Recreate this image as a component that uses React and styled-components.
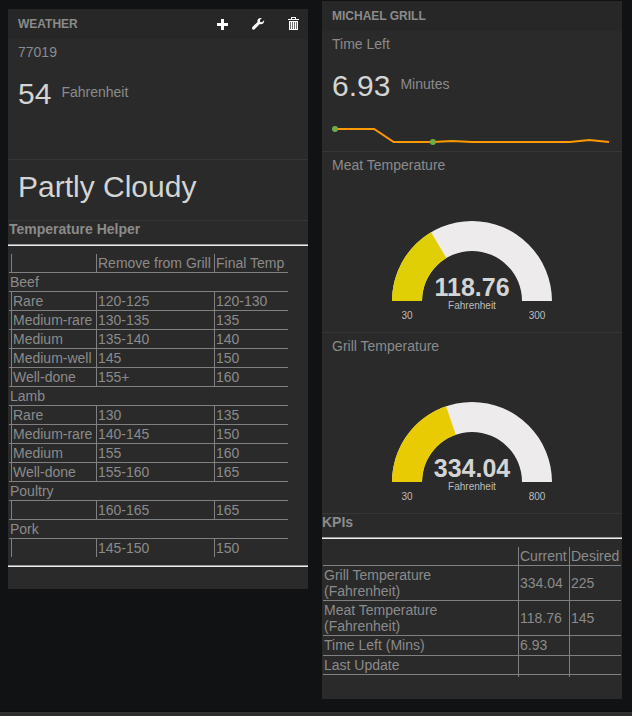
import React from "react";
import styled, { createGlobalStyle } from "styled-components";

const GlobalStyle = createGlobalStyle`
  *, *::before, *::after { box-sizing: border-box; }
  body {
    margin: 0;
    background: #101214;
    color: #8b8b8b;
    font: 14px/16px "Liberation Sans", Arial, sans-serif;
  }
`;

const Page = styled.div`
  min-height: 100vh;
  display: flex;
  flex-direction: column;
`;

const Board = styled.main`
  flex: 1;
  display: grid;
  grid-template-columns: 1fr 1fr;
  align-items: start;
  gap: 14px;
  padding: 1px 10px 12px 8px;
`;

const Pane = styled.section`
  margin-top: ${(p) => (p.$lowered ? "8px" : "0")};
  padding-bottom: 22px;
  background: #2a2a2a;
`;

const PaneHeader = styled.header`
  display: flex;
  align-items: center;
  justify-content: space-between;
  height: 30px;
  padding: 0 8px 0 10px;
  background: #272727;
`;

const PaneTitle = styled.h1`
  margin: 0;
  font-size: 12px;
  font-weight: bold;
  text-transform: uppercase;
`;

const Toolbar = styled.div`
  display: flex;
  gap: 21px;
`;

const IconButton = styled.button`
  display: flex;
  padding: 0;
  border: 0;
  background: none;
  color: #fff;
  cursor: pointer;
`;

const Widget = styled.div`
  display: flex;
  flex-direction: column;
  height: ${(p) => p.$height};
  padding: 4px 10px 0;
  border-bottom: 1px solid #363636;
`;

const WidgetTitle = styled.h2`
  margin: 0;
  font-size: 14px;
  font-weight: normal;
  line-height: 18px;
`;

const Reading = styled.div`
  display: flex;
  align-items: center;
  gap: 10px;
  margin-top: ${(p) => (p.$titled ? "14px" : "4px")};
`;

const Value = styled.span`
  color: #d3d4d4;
  font-size: 30px;
  line-height: 38px;
`;

const Unit = styled.span`
  padding-bottom: 4px;
`;

const Spark = styled.svg`
  display: block;
  width: 100%;
  height: 24px;
  margin-top: 19px;
`;

const GaugeDrawing = styled.svg`
  display: block;
  align-self: center;
  font-family: "Liberation Sans", Arial, sans-serif;
  text-anchor: middle;
`;

const GaugeValue = styled.text`
  fill: #d3d4d4;
  font-size: 25px;
  font-weight: bold;
`;

const GaugeLabel = styled.text`
  fill: #bdbdbd;
  font-size: 10px;
`;

const TableTitle = styled.h2`
  margin: 0 0 7px;
  padding-left: ${(p) => (p.$inset ? "1px" : "0")};
  font-size: 14px;
  line-height: 16px;
`;

const Rule = styled.hr`
  height: 2px;
  margin: 0;
  border: 0;
  border-top: 1px solid #9a9a9a;
  background: #eeeeee;
`;

const Table = styled.table`
  width: ${(p) => p.$width};
  margin: 8px 1px ${(p) => p.$below};
  table-layout: fixed;
  border-collapse: separate;
  border-spacing: 0;

  th, td {
    height: 19px;
    padding: 1px;
    border-bottom: 1px solid #808080;
    font-weight: normal;
    text-align: left;
    white-space: nowrap;
  }
`;

const Col = styled.col`
  width: ${(p) => p.$width};
`;

const Row = styled.tr`
  &&& td, &&& th {
    ${(p) => p.$last && "border-bottom: 0; height: 18px;"}
    ${(p) => p.$tall && "height: 20px; vertical-align: top;"}
    ${(p) => p.$tail && "border-bottom: 0; height: 2px;"}
  }
`;

const Ruled = styled.td`
  border-left: 1px solid #808080;
`;

const Footer = styled.footer`
  height: 4px;
  background: #2d2d2d;
  border-top: 1px solid #343434;
  box-shadow: 0 0 3px 0 #000;
`;

const PlusIcon = () => (
  <svg width="14" height="14" viewBox="0 0 14 14" aria-hidden="true">
    <path fill="currentColor" d="M5 2h3v4h4v3H8v4H5V9H1V6h4z" />
  </svg>
);

const WrenchIcon = () => (
  <svg width="14" height="14" viewBox="0 0 14 14" aria-hidden="true">
    <path
      fill="currentColor"
      d="M10.9 1.1 8.9 3l.3 1.9 1.9.3 2-1.9c.2 1.3-.1 2.4-1 3.2-.9.8-2.1 1-3.3.6l-4.9 5c-.7.7-1.8.8-2.5.2-.6-.7-.5-1.8.2-2.5l5-4.8c-.4-1.2-.2-2.3.6-3.1.9-.9 2.3-1.2 3.7-.8z"
    />
  </svg>
);

const TrashIcon = () => (
  <svg width="14" height="14" viewBox="0 0 14 14" aria-hidden="true">
    <path
      fill="currentColor"
      fillRule="evenodd"
      d="M5 0h5v2h3v1H2V2h3zM6 1v1h3V1zM3 4h9v9H3zM4 5v7h1V5zM6 5v7h1V5zM8 5v7h1V5zM10 5v7h1V5z"
    />
    <path fill="currentColor" fillOpacity="0.35" d="M4 5h7v7H4z" />
  </svg>
);

const CX = 100;
const CY = 127;

function band(from, to) {
  const at = (f, r) => {
    const a = Math.PI * (1 - f);
    return `${CX + r * Math.cos(a)} ${CY - r * Math.sin(a)}`;
  };
  return `M${at(from, 80)}A80 80 0 0 1 ${at(to, 80)}L${at(to, 50)}A50 50 0 0 0 ${at(from, 50)}Z`;
}

function Gauge({ title, value, min, max, color }) {
  return (
    <Widget $height="181px">
      <WidgetTitle>{title}</WidgetTitle>
      <GaugeDrawing width="200" height="158" viewBox="0 0 200 158" role="img" aria-label={title}>
        <path d={band(0, 1)} fill="#edebeb" />
        <path d={band(0, (value - min) / (max - min))} fill={color} />
        <GaugeValue x={CX} y="122">{value}</GaugeValue>
        <GaugeLabel x={CX} y="135">Fahrenheit</GaugeLabel>
        <GaugeLabel x="35" y="145">{min}</GaugeLabel>
        <GaugeLabel x="165" y="145">{max}</GaugeLabel>
      </GaugeDrawing>
    </Widget>
  );
}

const history = [5, 5, 5, 18, 18, 18, 17, 18, 18, 18, 18, 18, 18, 16, 18];
const sparkX = (i) => 3 + (i * 274) / (history.length - 1);

function Sparkline() {
  return (
    <Spark viewBox="0 0 280 24" preserveAspectRatio="xMinYMid meet" aria-hidden="true">
      <polyline
        points={history.map((y, i) => `${sparkX(i)},${y}`).join(" ")}
        fill="none"
        stroke="#ff9900"
        strokeWidth="2"
      />
      {[0, 5].map((i) => (
        <circle key={i} cx={sparkX(i)} cy={history[i]} r="3" fill="#6fac46" />
      ))}
    </Spark>
  );
}

const meats = [
  ["Beef", [
    ["Rare", "120-125", "120-130"],
    ["Medium-rare", "130-135", "135"],
    ["Medium", "135-140", "140"],
    ["Medium-well", "145", "150"],
    ["Well-done", "155+", "160"],
  ]],
  ["Lamb", [
    ["Rare", "130", "135"],
    ["Medium-rare", "140-145", "150"],
    ["Medium", "155", "160"],
    ["Well-done", "155-160", "165"],
  ]],
  ["Poultry", [["", "160-165", "165"]]],
  ["Pork", [["", "145-150", "150"]]],
];

function MeatTable() {
  return (
    <Table $width="93%" $below="8px" aria-labelledby="helper-title">
      <colgroup>
        <Col $width="2px" />
        <Col $width="85px" />
        <Col $width="118px" />
        <Col />
      </colgroup>
      <thead>
        <Row>
          <td />
          <Ruled />
          <Ruled as="th" scope="col">Remove from Grill</Ruled>
          <Ruled as="th" scope="col">Final Temp</Ruled>
        </Row>
      </thead>
      {meats.map(([name, cuts], g) => (
        <tbody key={name}>
          <Row>
            <th colSpan="4" scope="rowgroup">{name}</th>
          </Row>
          {cuts.map((cells) => (
            <Row key={cells[0]} $last={g === meats.length - 1}>
              <td />
              {cells.map((text, i) => (
                <Ruled key={i}>{text}</Ruled>
              ))}
            </Row>
          ))}
        </tbody>
      ))}
    </Table>
  );
}

function KpiTable() {
  return (
    <Table $width="calc(100% - 2px)" $below="0" aria-labelledby="kpi-title">
      <colgroup>
        <Col />
        <Col $width="51px" />
        <Col $width="52px" />
      </colgroup>
      <thead>
        <Row>
          <td />
          <Ruled as="th" scope="col">Current</Ruled>
          <Ruled as="th" scope="col">Desired</Ruled>
        </Row>
      </thead>
      <tbody>
        <Row>
          <th scope="row">Grill Temperature<br />(Fahrenheit)</th>
          <Ruled>334.04</Ruled>
          <Ruled>225</Ruled>
        </Row>
        <Row>
          <th scope="row">Meat Temperature<br />(Fahrenheit)</th>
          <Ruled>118.76</Ruled>
          <Ruled>145</Ruled>
        </Row>
        <Row $tall>
          <th scope="row">Time Left (Mins)</th>
          <Ruled>6.93</Ruled>
          <Ruled />
        </Row>
        <Row>
          <th scope="row">Last Update</th>
          <Ruled />
          <Ruled />
        </Row>
        <Row $tail>
          <td />
          <Ruled />
          <Ruled />
        </Row>
      </tbody>
    </Table>
  );
}

export default function App() {
  return (
    <Page>
      <GlobalStyle />
      <Board>
        <Pane $lowered>
          <PaneHeader>
            <PaneTitle>Weather</PaneTitle>
            <Toolbar>
              <IconButton type="button" aria-label="Add widget"><PlusIcon /></IconButton>
              <IconButton type="button" aria-label="Edit pane"><WrenchIcon /></IconButton>
              <IconButton type="button" aria-label="Delete pane"><TrashIcon /></IconButton>
            </Toolbar>
          </PaneHeader>
          <Widget $height="121px">
            <WidgetTitle>77019</WidgetTitle>
            <Reading $titled>
              <Value>54</Value>
              <Unit>Fahrenheit</Unit>
            </Reading>
          </Widget>
          <Widget $height="61px">
            <Reading>
              <Value>Partly Cloudy</Value>
            </Reading>
          </Widget>
          <TableTitle id="helper-title" $inset>Temperature Helper</TableTitle>
          <Rule />
          <MeatTable />
          <Rule />
        </Pane>

        <Pane>
          <PaneHeader>
            <PaneTitle>Michael Grill</PaneTitle>
          </PaneHeader>
          <Widget $height="121px">
            <WidgetTitle>Time Left</WidgetTitle>
            <Reading $titled>
              <Value>6.93</Value>
              <Unit>Minutes</Unit>
            </Reading>
            <Sparkline />
          </Widget>
          <Gauge title="Meat Temperature" value={118.76} min={30} max={300} color="#dfcf04" />
          <Gauge title="Grill Temperature" value={334.04} min={30} max={800} color="#e9cb04" />
          <TableTitle id="kpi-title">KPIs</TableTitle>
          <Rule />
          <KpiTable />
        </Pane>
      </Board>
      <Footer />
    </Page>
  );
}
